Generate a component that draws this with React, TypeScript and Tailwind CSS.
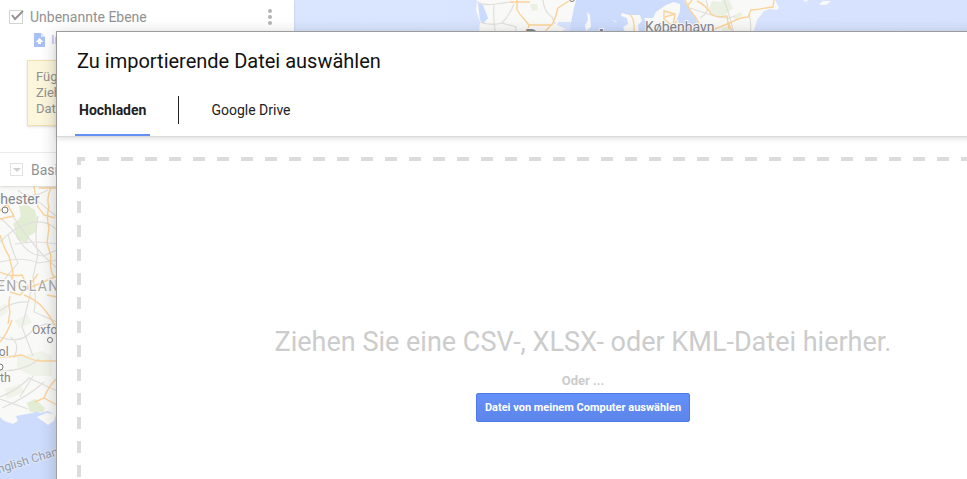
const ROAD = "#fbd39a";
const MINOR = "#e0dfdc";

function MapCanvas() {
  return (
    <svg className="absolute inset-0 h-full w-full font-[Roboto,sans-serif]" aria-label="Karte" role="img">
      <defs>
        <linearGradient id="sea" x1="0" y1="0" x2="1" y2="0">
          <stop offset="0" stopColor="#dbe6ff" />
          <stop offset="1" stopColor="#d6e2fe" />
        </linearGradient>
      </defs>
      <rect width="100%" height="100%" fill="url(#sea)" />

      <path d="M573 0 H690 L700 34 H570Z" fill="#cddcfd" />
      <path d="M477 0 L476 10 L480 22 L479 34 H563 L562 31 L566 29 L557 25 L558 22 L571 22 L574 8 L576 0Z" fill="#f9f9f7" />
      <path d="M587 12 l3 3 l1 12 l-5 4 l-1 -6 l3 -5z M612 19 l5 3 l-2 0z M622 13 l7 2 l11 0 l2 6 l-4 4 l1 9 h-13 l-3 -7 5 -3 -1 -6 -6 -2z M640 34 l6 -3 1 -8 -3 -5 9 0 3 -6 10 -7 8 -3 6 2 0 7 -3 8 5 9 3 6z" fill="#f9f9f7" />
      <path d="M684 0 L690 10 L697 20 L700 34 H753 L757 20 L764 11 L770 9 L777 10 L779 8 L775 0Z M803 0 h5 l-2 2z M819 4 l4 -3 h8 l-5 4 -5 0z" fill="#f9f9f7" />
      <path d="M478 3 l5 2 5 13 -5 6 -3 -4z" fill="#cbdbfd" />
      <path d="M709 8 l3 -7 8 1 3 -2 6 0 4 8 -9 8 -12 -1z M733 16 l7 -4 3 3 -8 5z M530 4 l7 0 1 6 -6 1z M721 28 l7 -2 3 4 -8 2z" fill="#eaf1e2" />
      <g fill="none" stroke={MINOR} strokeWidth="1.2">
        <path d="M477 2 Q485 6 496 4 T513 2 M494 4 Q493 17 495 31 M514 4 Q511 13 502 23 L516 27 V34 M479 22 Q492 26 502 23 M543 0 Q544 12 552 17 L555 24 M690 8 Q702 12 714 16 T735 16 M724 0 Q729 12 734 34 M706 0 Q711 12 700 18 M749 14 Q752 25 750 34" />
      </g>
      <g fill="none" stroke={ROAD} strokeWidth="1.4">
        <path d="M510 2 H530 M517 0 V10 Q520 15 524 19 L529 25 H552 M552 25 Q556 17 558 8 L569 1 M529 25 L527 34 M551 25 L543 34 M630 15 Q635 18 634 34 M664 10 V19 L676 29 M665 17 L675 14 L673 25 L677 21 M664 11 L675 14 M685 0 L690 10 L697 19 L704 34 M688 5 L692 0 M697 1 Q707 6 711 14 Q717 18 727 16 L729 29 M715 29 L732 22 Q741 17 748 17 L751 10 Q760 9 773 7 L774 0 M729 24 L733 34" />
      </g>

      <path d="M0 186 H57 V425 L48 417 L41 413 L32 415 L17 416 L18 421 L13 424 L5 421 L0 419Z" fill="#f9f9f7" />
      <path d="M0 417 L5 422 L13 424 L18 421 L16 416 L32 413 L44 409 L57 415 V479 H0Z" fill="#cddcfd" />
      <path d="M33 407 L44 403 L57 412 V416 L48 411 L40 413Z" fill="#f9f9f7" />
      <path d="M37 417 L46 413 L56 414 L54 421 L48 425Z" fill="#f9f9f7" />
      <path d="M19 206 l8 -1 8 5 2 8 -1 14 -7 4 -2 8 -10 -5 -2 -9 -2 -6 5 -4 3 -4z M27 403 l8 -4 10 9 -2 4 -13 0z" fill="#e2edd4" />
      <path d="M17 357 l25 -6 10 5 v20 l-20 0 -15 -8z M5 389 l15 -5 5 8 -18 7z M0 307 l6 -4 2 9 -8 5z M15 321 l12 -7 5 9 -13 5z" fill="#eff3ea" />
      <g fill="none" stroke={MINOR} strokeWidth="1.2">
        <path d="M0 193 Q8 199 17 199 T38 201 L57 217 M0 218 Q12 227 20 241 T43 256 L57 250 M0 242 Q14 227 30 223 T57 230 M8 234 Q12 251 18 263 L0 285 M12 215 Q23 232 35 246 T57 268 M18 190 Q28 201 48 190 M15 244 Q34 240 57 244 M0 262 Q21 256 39 263 L57 260 M38 216 Q34 238 38 254 L33 277 M33 277 Q37 297 34 312 L57 322 M0 311 Q12 301 28 302 M10 276 Q20 286 31 291 L22 327 L33 356 M33 376 L20 397 M0 337 Q20 344 30 333 T57 324 M0 397 Q18 390 29 378 L57 391 M0 371 Q25 371 39 359 M10 337 Q21 343 14 358 M2 408 Q28 397 44 382 M0 399 L28 409" />
      </g>
      <g fill="none" stroke={ROAD} strokeWidth="1.4">
        <path d="M34 186 Q35 196 38 207 L44 215 L55 218 M39 188 H57 M51 188 Q46 198 49 207 Q46 217 49 228 L47 243 L51 256 Q49 269 54 277 M0 211 L7 204 L14 216 L0 219 M0 235 Q4 249 9 256 L13 272 L12 280 M0 272 Q9 277 22 275 L28 287 L20 295 L10 292 M28 287 L38 274 M27 289 Q41 283 57 276 M24 295 Q37 300 44 309 Q50 316 57 329 M10 296 Q8 304 10 312 L8 324 M12 320 Q7 334 0 342 M47 295 L57 297 M0 357 Q12 357 22 355 Q33 361 41 361 H57 M57 378 Q48 387 44 398 L35 402 M44 398 L57 405" />
      </g>

      <g fill="#85868a" stroke="#fafafa" strokeWidth="2" paintOrder="stroke" fontSize="14">
        <text x="-7" y="204">chester</text>
        <text x="32" y="334" fontSize="12">Oxford</text>
        <text x="-5" y="356" fontSize="12">tol</text>
        <text x="0" y="382" fontSize="12">th</text>
        <text x="645" y="32">København</text>
        <text x="525" y="44" fontSize="21" fontWeight="700">Danmark</text>
        <text x="-3" y="291" fill="#aaa9a6" className="tracking-widest">ENGLAND</text>
        <text x="-1" y="473" fill="#929cab" stroke="#dfe7fa" fontSize="12" transform="rotate(-17 0 473)">nglish Channel</text>
      </g>
      <g fill="#fff" stroke="#77787a">
        <circle cx="5" cy="210" r="3" /><circle cx="50" cy="340" r="2.5" /><circle cx="0" cy="367" r="3" /><circle cx="572" cy="-1" r="2.5" />
      </g>
    </svg>
  );
}

function LayerPanel() {
  return (
    <aside className="relative h-[186px] w-[294px] bg-white font-[Roboto,sans-serif] text-[#929292] shadow-sm">
      <div className="flex h-[33px] items-center gap-[7px] pl-[9px] pr-5">
        <span className="relative flex">
          <input id="layer" type="checkbox" defaultChecked className="size-[14px] appearance-none border border-[#d4d4d4]" />
          <svg className="pointer-events-none absolute bottom-0 left-0 h-4 w-[15px]" viewBox="0 0 15 16" fill="none" stroke="#929292" strokeWidth="2"><path d="M3 7 L6 11 L14 3" /></svg>
        </span>
        <label htmlFor="layer" className="flex-1 text-sm">Unbenannte Ebene</label>
        <button aria-label="Ebenenoptionen" className="flex w-[9px] flex-col items-center gap-[2px]">
          <i className="size-1 rounded-full bg-[#b4b4b4]" /><i className="size-1 rounded-full bg-[#b4b4b4]" /><i className="size-1 rounded-full bg-[#b4b4b4]" />
        </button>
      </div>
      <button className="ml-[34px] flex h-[14px] items-center gap-[6px] text-[13px] text-[#a9c0f5]">
        <svg className="h-[14px] w-[11px]" viewBox="0 0 11 14"><path d="M0 0 H7 L11 4 V14 H0Z" fill="#a9c0f5" /><path d="M7 0 V4 H11Z" fill="#dce6fd" /><path d="M5.500 5 L9.500 9 H7 V11 H4 V9 H1.500Z" fill="#fff" /></svg>
        Importieren
      </button>
      <div className="ml-[27px] mt-[13px] w-[190px] border border-[#f2e0ad] bg-[#fbf6dc] px-2 py-2 text-[13px] leading-4 shadow-sm">
        Fügen Sie Orte hinzu:<br />Ziehen Sie eine<br />Datei hierher.
      </div>
      <div className="mt-[26px] flex h-[34px] items-center gap-2 border-t border-[#ebebeb] pl-[10px]">
        <button aria-label="Basiskarte öffnen" className="flex size-[13px] items-center justify-center border border-[#e2e2e2]">
          <svg className="h-1 w-2" viewBox="0 0 8 4"><path d="M0 0 H8 L4 4Z" fill="#d0d0d0" /></svg>
        </button>
        <span className="text-sm">Basiskarte</span>
      </div>
    </aside>
  );
}

function ImportDialog() {
  return (
    <section role="dialog" aria-labelledby="title" className="absolute inset-x-14 top-[31px] flex h-[600px] flex-col border border-[#a0a0a0] bg-white font-[Roboto,sans-serif] shadow-[0_4px_16px_rgba(0,0,0,0.2)]">
      <header className="border-b border-[#d9d9d9] px-[18px] pt-[15px] shadow-[0_2px_5px_rgba(0,0,0,0.12)]">
        <h1 id="title" className="px-[2px] text-xl leading-7 text-[#111]">Zu importierende Datei auswählen</h1>
        <nav className="mt-[9px] flex h-[52px] items-stretch text-sm text-[#222]">
          <button className="border-b-2 border-[#6390f7] px-1 pt-[2px] font-bold">Hochladen</button>
          <span className="ml-7 mt-3 h-7 w-px bg-[#222]" />
          <button className="ml-7 border-b-2 border-transparent px-1 pt-[2px]">Google Drive</button>
        </nav>
      </header>
      <div className="m-5 flex flex-1 flex-col items-center bg-[linear-gradient(90deg,#dcdcdc_50%,transparent_50%),linear-gradient(#dcdcdc_50%,transparent_50%)] bg-[length:24px_4px,4px_24px] bg-[position:-4px_0,0_-4px] [background-repeat:repeat-x,repeat-y] pt-[169px]">
        <p className="text-[27px] leading-8 text-[#ccc]">Ziehen Sie eine CSV-, XLSX- oder KML-Datei hierher.</p>
        <p className="mt-[15px] text-[13px] font-bold leading-4 text-[#ccc]">Oder ...</p>
        <button className="mt-1 h-[29px] rounded-[2px] border border-[#4f7bea] bg-linear-to-b from-[#6490fa] to-[#5d85ea] px-2 pt-px text-[11px] font-bold text-white">Datei von meinem Computer auswählen</button>
      </div>
    </section>
  );
}

export default function App() {
  return (
    <div className="h-screen overflow-hidden">
      <main className="relative h-full min-w-[1166px]">
        <MapCanvas />
        <LayerPanel />
        <ImportDialog />
      </main>
    </div>
  );
}
